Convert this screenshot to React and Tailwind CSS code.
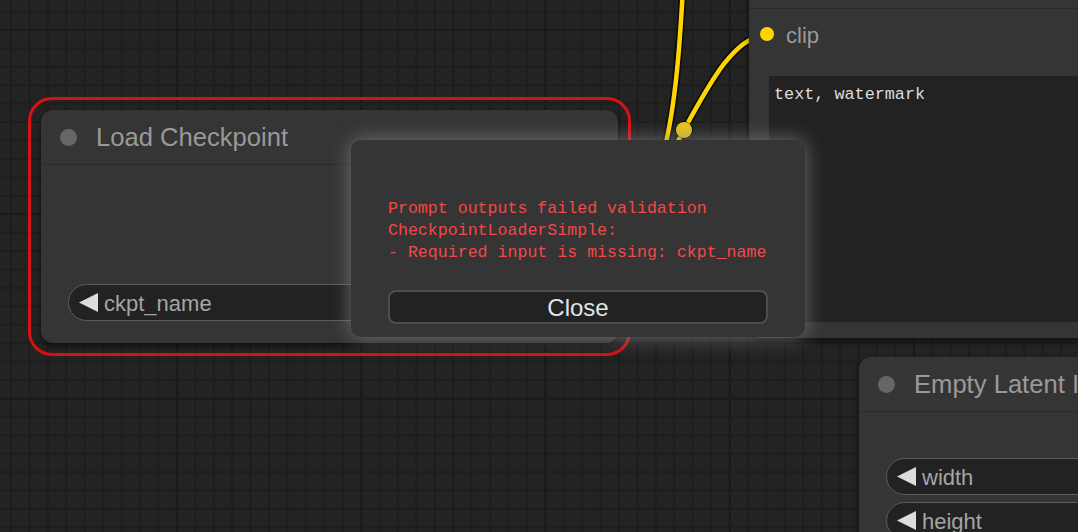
function Arrow() {
  return (
    <svg width="19" height="19" viewBox="0 0 19 19" className="shrink-0">
      <polygon points="0,9.5 19,0 19,19" fill="#dddddd" />
    </svg>
  );
}

function Pill({ label, className = "" }) {
  return (
    <div
      className={
        "flex items-center h-[37px] rounded-full bg-[#222222] border-[1.5px] border-[#5c5c5c] pl-[10px] " +
        className
      }
    >
      <Arrow />
      <span className="ml-[6px] text-[22px] leading-none text-[#a5a5a5] translate-y-[1px]">{label}</span>
    </div>
  );
}

export default function App() {
  return (
    <div className="relative w-[1078px] h-[532px] overflow-hidden bg-[#232323] bg-[image:linear-gradient(to_right,#1a1a1a_2px,transparent_2px),linear-gradient(to_bottom,#1a1a1a_2px,transparent_2px),linear-gradient(to_right,#1d1d1d_1.5px,transparent_1.5px),linear-gradient(to_bottom,#1d1d1d_1.5px,transparent_1.5px)] bg-[size:184.3px_184.3px,184.3px_184.3px,18.43px_18.43px,18.43px_18.43px] bg-[position:176px_29px,176px_29px,10.1px_10.6px,10.1px_10.6px] font-['Liberation_Sans',Arial,sans-serif]">
      {/* links */}
      <svg className="absolute inset-0" width="1078" height="532">
        <path d="M601 225 C739 225 630 -300 768 -300" fill="none" stroke="rgba(0,0,0,0.6)" strokeWidth="8" />
        <path d="M601 225 C664 225 704 35 767 35" fill="none" stroke="rgba(0,0,0,0.6)" strokeWidth="8" />
        <path d="M601 225 C739 225 630 -300 768 -300" fill="none" stroke="#FFD500" strokeWidth="4.5" />
        <path d="M601 225 C664 225 704 35 767 35" fill="none" stroke="#FFD500" strokeWidth="4.5" />
        <circle cx="684" cy="130" r="9" fill="rgba(0,0,0,0.5)" />
        <circle cx="684" cy="130" r="8" fill="#e8c420" />
      </svg>

      {/* CLIP Text Encode (top right) */}
      <div className="absolute left-[749px] top-[-46px] w-[420px] h-[384px] rounded-[12px] bg-[#353535] shadow-[0_3px_6px_rgba(0,0,0,0.55)] flex flex-col">
        <div className="h-[55px] shrink-0 border-b border-[#2b2b2b]" />
        <div className="flex items-center h-[50px] shrink-0 pl-[11px]">
          <div className="w-[14px] h-[14px] rounded-full bg-[#FFD500]" />
          <span className="ml-[12px] text-[22px] leading-none text-[#9a9a9a] translate-y-[2px]">clip</span>
        </div>
        <div className="mt-[17px] ml-[20px] h-[246px] bg-[#222222] pl-[5px] pt-[9px] font-['Liberation_Mono','DejaVu_Sans_Mono',monospace] text-[16.8px] leading-[20px] text-[#dddddd]">
          text, watermark
        </div>
      </div>

      {/* Empty Latent Image */}
      <div className="absolute left-[859px] top-[357px] w-[320px] h-[300px] rounded-[12px] bg-[#353535] shadow-[0_3px_6px_rgba(0,0,0,0.55)] flex flex-col">
        <div className="h-[55px] shrink-0 border-b border-[#2b2b2b] flex items-center">
          <div className="ml-[18.5px] w-[17px] h-[17px] rounded-full bg-[#666666]" />
          <span className="ml-[19.5px] text-[25.6px] leading-none text-[#999999] whitespace-nowrap translate-y-[1px]">Empty Latent Image</span>
        </div>
        <div className="flex flex-col gap-[7px] mt-[46px] ml-[27px]">
          <Pill label="width" className="w-[400px]" />
          <Pill label="height" className="w-[400px]" />
        </div>
      </div>

      {/* Load Checkpoint with error ring */}
      <div className="absolute left-[28px] top-[97px] w-[603px] h-[259px] rounded-[24px] border-[3px] border-[#d71212] p-[10px]">
        <div className="w-full h-full rounded-[12px] bg-[#353535] shadow-[0_3px_6px_rgba(0,0,0,0.55)] flex flex-col">
          <div className="h-[55px] shrink-0 border-b border-[#2b2b2b] flex items-center">
            <div className="ml-[18.5px] w-[17px] h-[17px] rounded-full bg-[#666666]" />
            <span className="ml-[19.5px] text-[25.6px] leading-none text-[#999999] whitespace-nowrap translate-y-[1px]">Load Checkpoint</span>
          </div>
          <div className="mt-[119px] mx-[27px]">
            <Pill label="ckpt_name" />
          </div>
        </div>
      </div>

      {/* Error dialog */}
      <div className="absolute left-[351px] top-[140px] w-[454px] h-[197px] rounded-[10px] bg-[#353535] shadow-[0_0_20px_#888888c0] flex flex-col pt-[58px] px-[37px] pb-[13px]">
        <div className="font-['Liberation_Mono','DejaVu_Sans_Mono',monospace] text-[16.6px] leading-[22px] text-[#f24848] whitespace-pre">
          <div>Prompt outputs failed validation</div>
          <div>CheckpointLoaderSimple:</div>
          <div>- Required input is missing: ckpt_name</div>
        </div>
        <button className="mt-auto h-[34px] w-full rounded-[8px] bg-[#222222] border-2 border-[#4e4e4e] text-[24px] leading-none text-[#e0e4ea] flex items-center justify-center font-['Liberation_Sans',Arial,sans-serif]">
          <span className="translate-y-[1px]">Close</span>
        </button>
      </div>
    </div>
  );
}
